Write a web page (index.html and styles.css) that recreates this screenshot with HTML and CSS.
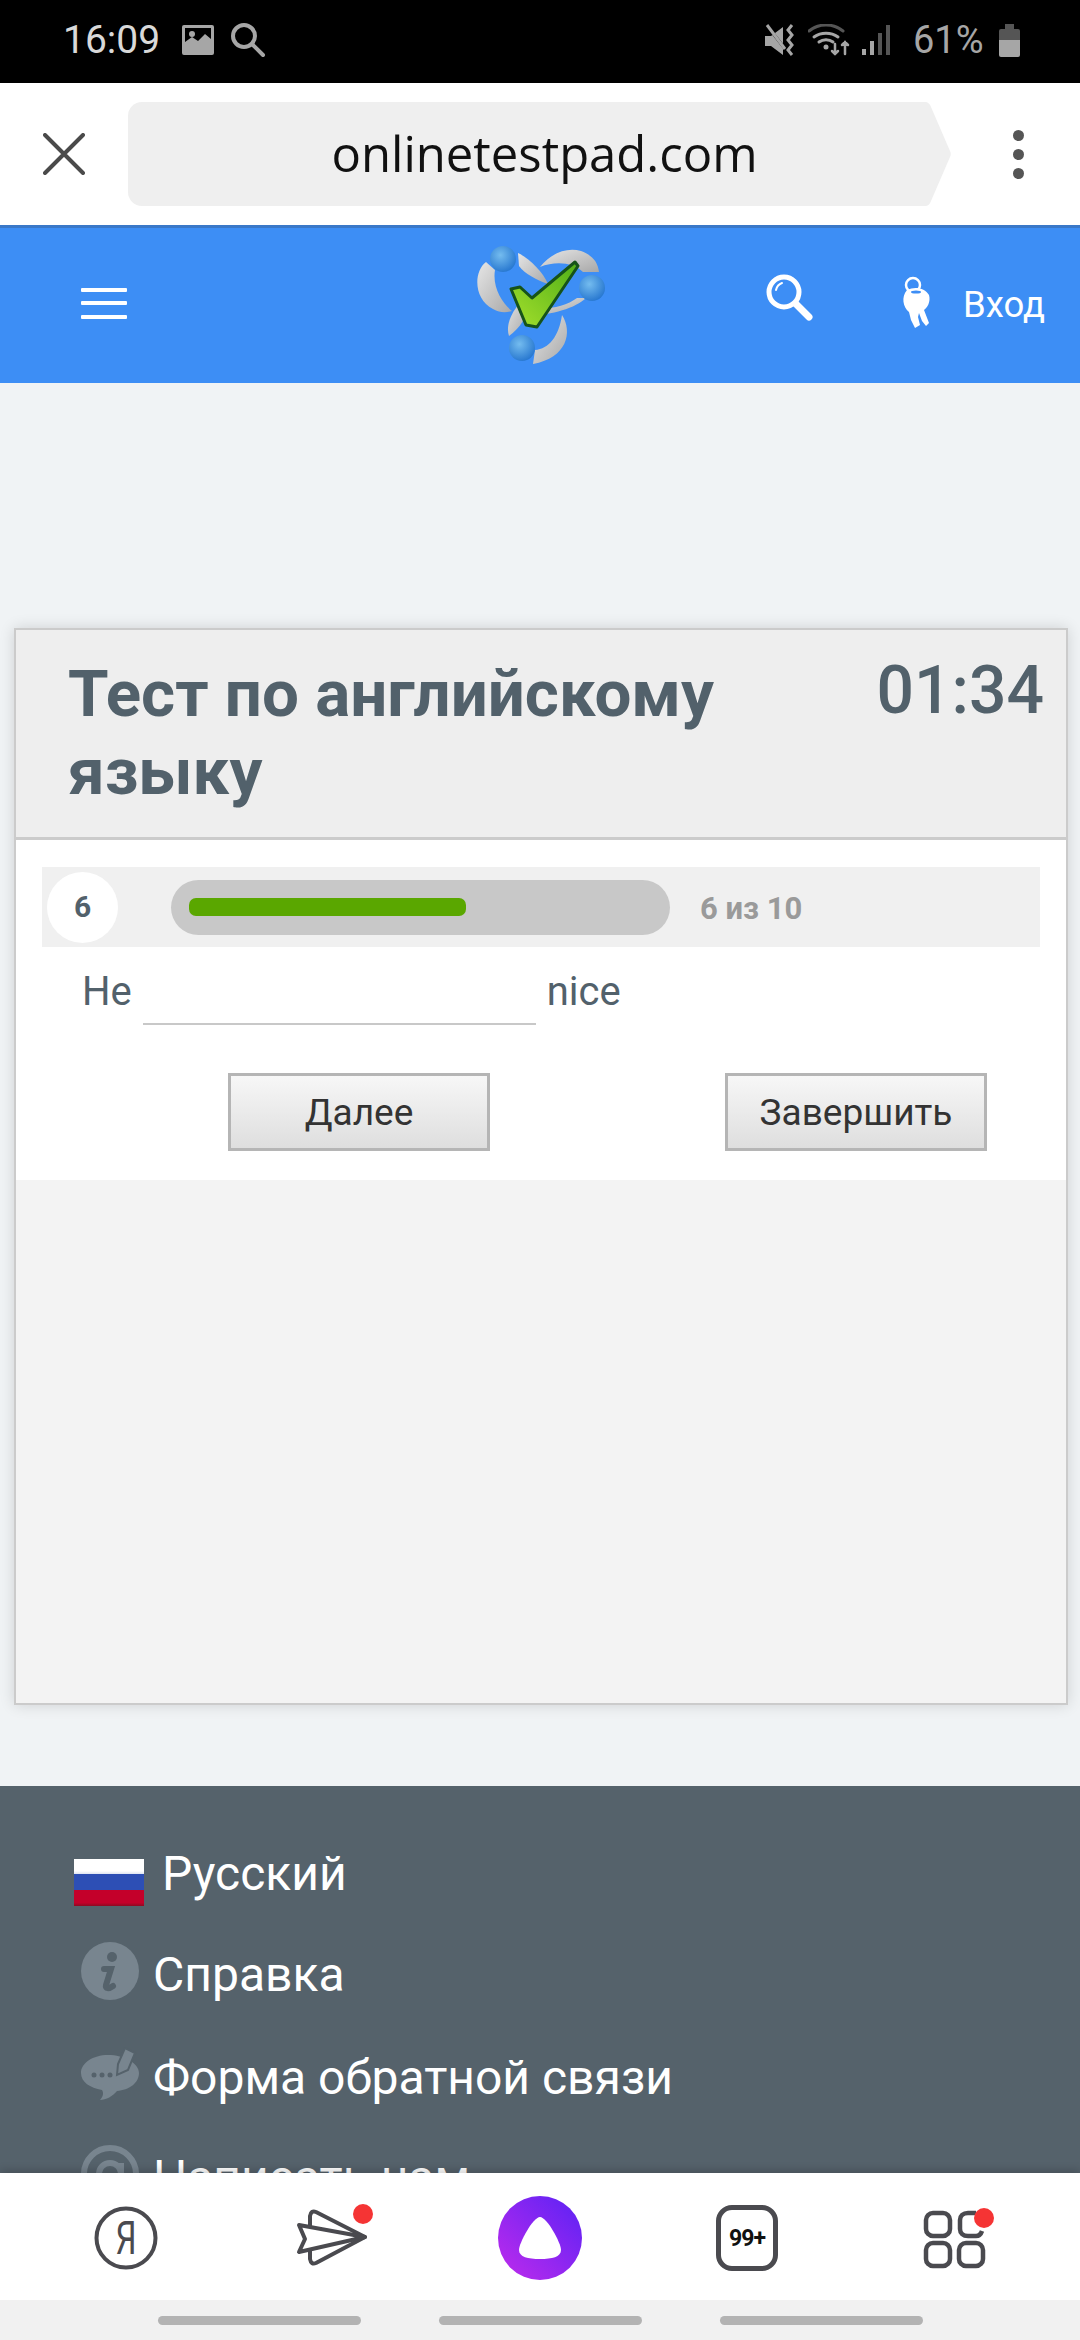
FILE: index.html
```html
<!DOCTYPE html>
<html lang="ru">
<head>
  <meta charset="UTF-8">
  <title>Тест по английскому языку</title>
  <link rel="stylesheet" href="styles.css">
</head>
<body>

  <div class="status-bar">
    <span class="clock">16:09</span>
    <svg class="st-picture" width="32" height="30" viewBox="0 0 32 30">
      <path fill="#a6a6a6" fill-rule="evenodd" d="M2 0h28a2 2 0 0 1 2 2v26a2 2 0 0 1-2 2H2a2 2 0 0 1-2-2V2a2 2 0 0 1 2-2zM3 3v14l7-5 6 4 7-7 6 5V3z"/>
      <circle cx="10" cy="9" r="3" fill="#a6a6a6"/>
    </svg>
    <svg class="st-search" width="36" height="36" viewBox="0 0 36 36" fill="none" stroke="#a6a6a6" stroke-width="4" stroke-linecap="round">
      <circle cx="14" cy="14" r="11"/>
      <path d="M22 22l11 11"/>
    </svg>
    <div class="status-right">
      <svg class="st-mute" width="31" height="32" viewBox="0 0 31 32">
        <path fill="#a6a6a6" d="M0 12h6l12-9v28L6 22H0z"/>
        <path stroke="#000" stroke-width="3" d="M0 -1l21 27"/>
        <path stroke="#a6a6a6" stroke-width="3" d="M2 1l18 24"/>
        <path stroke="#a6a6a6" stroke-width="3" fill="none" d="M27 1l-4 5 4 5-4 5 4 5-4 5 4 5"/>
      </svg>
      <svg class="st-wifi" width="42" height="32" viewBox="0 0 42 32" fill="none" stroke-linecap="round">
        <path stroke="#555" stroke-width="3" d="M1 7c10-8 24-8 34 0"/>
        <path stroke="#a6a6a6" stroke-width="3" d="M6 13c7-5 17-5 24 0M11 18c4-3 10-3 14 0"/>
        <circle cx="18" cy="23" r="2.5" fill="#a6a6a6"/>
        <path stroke="#a6a6a6" stroke-width="2.5" d="M27 20v10m-3-3l3 3 3-3M37 30V18m-3 3l3-3 3 3"/>
      </svg>
      <svg class="st-signal" width="28" height="32" viewBox="0 0 28 32">
        <rect x="0" y="25" width="4" height="6" fill="#a6a6a6"/>
        <rect x="8" y="17" width="4" height="14" fill="#a6a6a6"/>
        <rect x="16" y="9" width="4" height="22" fill="#555"/>
        <rect x="24" y="1" width="4" height="30" fill="#555"/>
      </svg>
      <span class="battery-text">61%</span>
      <div class="battery">
        <div class="battery-cap"></div>
        <div class="battery-empty"></div>
        <div class="battery-full"></div>
      </div>
    </div>
  </div>

  <div class="toolbar">
    <svg class="tb-close" width="42" height="42" viewBox="0 0 42 42" stroke="#4a4a4a" stroke-width="4" stroke-linecap="round">
      <path d="M2 2l38 38M40 2L2 40"/>
    </svg>
    <div class="address">onlinetestpad.com</div>
    <svg class="address-tip" width="26" height="104" viewBox="0 0 26 104"><path fill="#efefef" d="M0 0c3 0 5 2 6 5l19 44c1 2 1 4 0 6L6 99c-1 3-3 5-6 5z"/></svg>
    <div class="tb-menu"><i></i><i></i><i></i></div>
  </div>

  <div class="site-header">
    <div class="burger"><i></i><i></i><i></i></div>
    <svg class="logo" width="150" height="135" viewBox="0 0 150 135">
      <defs>
        <radialGradient id="ball" cx="0.4" cy="0.35" r="0.75">
          <stop offset="0" stop-color="#74bcef"/>
          <stop offset="1" stop-color="#1f70cc"/>
        </radialGradient>
        <linearGradient id="silver" x1="0" y1="0" x2="1" y2="1">
          <stop offset="0" stop-color="#e6e6e6"/>
          <stop offset="1" stop-color="#a8a8a8"/>
        </linearGradient>
        <linearGradient id="check" x1="1" y1="0" x2="0" y2="1">
          <stop offset="0" stop-color="#4fae18"/>
          <stop offset="1" stop-color="#a5e02c"/>
        </linearGradient>
      </defs>
      <path fill="url(#silver)" d="M21 26C8 36 9 64 28 73 35 77 41 77 47 75 38 68 27 52 30 34z"/>
      <path fill="url(#silver)" d="M53 17C64 22 78 36 83 48 72 44 60 38 54 30z"/>
      <path fill="url(#silver)" d="M75 31C86 17 102 11 116 15 127 19 133 26 134 36L118 36C108 26 90 25 75 31z"/>
      <path fill="url(#silver)" d="M121 62C110 73 80 81 58 79L60 71C80 75 100 71 112 62z"/>
      <path fill="url(#silver)" d="M61 61C65 76 58 90 44 100 40 88 48 72 61 61z"/>
      <path fill="url(#silver)" d="M97 79C108 96 102 122 68 128L70 114C84 113 94 100 97 79z"/>
      <path fill="url(#check)" stroke="#16531a" stroke-width="3" stroke-linejoin="round" d="M46 53L55 51 67 62 110 26 113 30 72 91 61 89z"/>
      <circle cx="38" cy="23" r="13" fill="url(#ball)"/>
      <circle cx="127" cy="52" r="13" fill="url(#ball)"/>
      <circle cx="57" cy="112" r="13" fill="url(#ball)"/>
    </svg>
    <svg class="hd-search" width="48" height="48" viewBox="0 0 48 48" fill="none" stroke="#fff" stroke-linecap="round">
      <circle cx="19" cy="19" r="15" stroke-width="5"/>
      <path d="M11 17c1-4 3-6 6-7" stroke-width="2"/>
      <path d="M31 31l13 13" stroke-width="7"/>
    </svg>
    <svg class="hd-keys" width="60" height="70" viewBox="0 0 60 70">
      <circle cx="20" cy="20" r="7" fill="none" stroke="#fff" stroke-width="2.5"/>
      <path fill="#fff" d="M14 25C22 21 32 23 36 30 38 37 34 43 31 45L36 58 33 61 29 56 26 48 25 52 27 60 22 63 18 55 16 47C10 42 8 32 14 25z"/>
      <ellipse cx="23" cy="27" rx="5" ry="1.5" fill="#3d8ef5"/>
    </svg>
    <span class="login">Вход</span>
  </div>

  <div class="page">
    <div class="test-card">
      <div class="test-head">
        <h1>Тест по английскому языку</h1>
        <div class="timer">01:34</div>
      </div>
      <div class="test-body">
        <div class="progress-row">
          <div class="q-num">6</div>
          <div class="bar"><div class="bar-fill"></div></div>
          <div class="q-count">6 из 10</div>
        </div>
        <div class="question">
          <span>He</span>
          <input class="answer" type="text">
          <span>nice</span>
        </div>
        <div class="buttons">
          <button class="btn btn-next">Далее</button>
          <button class="btn btn-finish">Завершить</button>
        </div>
      </div>
    </div>

    <div class="footer">
      <div class="foot-item foot-lang">
        <div class="flag"><i class="fl-w"></i><i class="fl-b"></i><i class="fl-r"></i></div>
        <span>Русский</span>
      </div>
      <div class="foot-item foot-help">
        <svg width="58" height="58" viewBox="0 0 58 58">
          <circle cx="29" cy="29" r="29" fill="#78858f"/>
          <circle cx="31" cy="15" r="5" fill="#55626b"/>
          <path fill="none" stroke="#55626b" stroke-width="6" stroke-linecap="round" d="M23 27h7l-5 16c-1 4 3 4 7 1"/>
        </svg>
        <span>Справка</span>
      </div>
      <div class="foot-item foot-form">
        <svg width="58" height="54" viewBox="11 9 58 54">
          <path fill="#78858f" d="M38 17C23 17 11 25 11 35c0 9 9 15 21 17 2 3 1 7-2 10 6 0 13-4 17-9 12-1 22-8 22-18S54 17 38 17z"/>
          <path fill="#78858f" stroke="#55626b" stroke-width="2" d="M47 37L48 26 55 10 65 15 58 32z"/>
          <circle cx="24" cy="37" r="2.5" fill="#55626b"/>
          <circle cx="32" cy="37" r="2.5" fill="#55626b"/>
          <circle cx="40" cy="37" r="2.5" fill="#55626b"/>
        </svg>
        <span>Форма обратной связи</span>
      </div>
      <div class="foot-item foot-mail">
        <svg width="58" height="58" viewBox="0 0 58 58" fill="none" stroke="#78858f">
          <circle cx="29" cy="29" r="26" stroke-width="6"/>
          <circle cx="29" cy="29" r="11" stroke-width="6"/>
          <path stroke-width="6" d="M40 18v22"/>
        </svg>
        <span>Написать нам</span>
      </div>
    </div>
  </div>

  <div class="bottom-bar">
    <svg class="bb-yandex" width="64" height="64" viewBox="0 0 64 64">
      <circle cx="32" cy="32" r="29.5" fill="none" stroke="#4a4a4f" stroke-width="4"/>
      <text class="bb-yandex-letter" transform="translate(32 48) scale(0.72 1)">Я</text>
    </svg>
    <svg class="bb-plane" width="110" height="90" viewBox="0 0 110 90" fill="none" stroke="#4a4a4f" stroke-width="4" stroke-linejoin="round">
      <path d="M30 34V24Q31 18 36 20L85 45 36 71Q31 73 30 67V58"/>
      <path d="M85 45L19 33 25 47 19 60z"/>
      <circle cx="83" cy="22" r="10" fill="#f53434" stroke="none"/>
    </svg>
    <div class="alice">
      <svg width="42" height="42" viewBox="0 0 42 42"><path fill="#fff" d="M21 0C28 0 42 26 42 33 42 40 33 42 21 42S0 40 0 33C0 26 14 0 21 0z"/></svg>
    </div>
    <div class="tabs-count">99+</div>
    <svg class="bb-apps" width="72" height="62" viewBox="0 0 72 62" fill="none" stroke="#4a4a4f" stroke-width="4.5">
      <rect x="3" y="6" width="24" height="23" rx="7"/>
      <path d="M53 6h-8c-5 0-8 3-8 7v9c0 4 3 7 8 7h8c3 0 5-2 6-5"/>
      <rect x="3" y="36" width="24" height="23" rx="7"/>
      <rect x="36" y="36" width="24" height="23" rx="7"/>
      <circle cx="61" cy="11" r="10" fill="#f53434" stroke="none"/>
    </svg>
  </div>

  <div class="nav-bar"><i></i><i></i><i></i></div>

</body>
</html>
```

FILE: styles.css
```css
* {
  box-sizing: border-box;
}

body {
  font-family: Roboto, sans-serif;
  background-color: #f0f3f5;
  margin: 0;
  padding: 0;
  width: 1080px;
  height: 2340px;
  display: flex;
  flex-direction: column;
  overflow: hidden;
}

.status-bar {
  height: 83px;
  flex: none;
  background: #000;
  display: flex;
  align-items: center;
  padding: 0 0 3px 63px;
  color: #d9d9d9;
}

.clock {
  font-size: 39px;
}

.st-picture {
  margin-left: 22px;
}

.st-search {
  margin-left: 16px;
}

.status-right {
  margin-left: auto;
  padding-right: 60px;
  display: flex;
  align-items: center;
}

.st-wifi,
.st-signal {
  margin-left: 12px;
}

.battery-text {
  font-size: 38px;
  color: #a6a6a6;
  margin-left: 23px;
  width: 70px;
}

.battery {
  width: 21px;
  margin-left: 16px;
  display: flex;
  flex-direction: column;
  align-items: center;
}

.battery-cap {
  width: 9px;
  height: 5px;
  background: #555;
}

.battery-empty {
  width: 21px;
  height: 11px;
  background: #555;
  border-radius: 2px 2px 0 0;
}

.battery-full {
  width: 21px;
  height: 17px;
  background: #a6a6a6;
  border-radius: 0 0 2px 2px;
}

.toolbar {
  height: 142px;
  flex: none;
  background: #fff;
  display: flex;
  align-items: center;
  padding-left: 43px;
}

.address {
  margin-left: 43px;
  width: 797px;
  height: 104px;
  background: #efefef;
  border-radius: 14px 0 0 14px;
  font-family: "Open Sans", sans-serif;
  font-size: 49px;
  color: #111;
  display: flex;
  align-items: center;
  justify-content: center;
  padding: 0 0 3px 36px;
}

.tb-menu {
  margin-left: 62px;
  display: flex;
  flex-direction: column;
  gap: 8px;
}

.tb-menu i {
  display: block;
  width: 11px;
  height: 11px;
  border-radius: 50%;
  background: #555;
}

.site-header {
  height: 158px;
  flex: none;
  background: #3d8ef5;
  border-top: 3px solid #3a78c8;
  display: flex;
  align-items: center;
  color: #fff;
  padding: 0 0 5px 81px;
}

.burger {
  width: 46px;
  display: flex;
  flex-direction: column;
  gap: 9.5px;
}

.burger i {
  display: block;
  height: 4px;
  background: #fff;
  border-radius: 1px;
}

.logo {
  margin-left: 338px;
}

.hd-search {
  margin-left: 150px;
  margin-top: -13px;
}

.hd-keys {
  margin-left: 80px;
  margin-top: -6px;
}

.login {
  margin-left: 10px;
  margin-top: 2px;
  font-size: 36.5px;
  font-weight: 400;
}

.page {
  flex: 1;
  min-height: 0;
  overflow: hidden;
  padding-top: 245px;
}

.test-card {
  margin-left: 14px;
  width: 1054px;
  height: 1077px;
  background: #f3f3f3;
  border: 2px solid #cbcbcb;
  box-shadow: 0 0 14px rgba(0,0,0,0.14);
}

.test-head {
  height: 210px;
  background: #eeeeee;
  border-bottom: 3px solid #cbcbcb;
  display: flex;
  justify-content: space-between;
  padding: 25px 22px 0 52px;
  color: #52616b;
}

.test-head h1 {
  margin: 0;
  width: 700px;
  font-size: 65.5px;
  line-height: 78px;
  font-weight: 700;
}

.timer {
  font-size: 66px;
  font-weight: 500;
  line-height: 66px;
  margin-top: 3px;
}

.test-body {
  height: 340px;
  background: #fff;
  padding: 27px 26px 0;
}

.progress-row {
  height: 80px;
  background: #f0f0f0;
  display: flex;
  align-items: center;
  padding-left: 5px;
}

.q-num {
  width: 71px;
  height: 71px;
  border-radius: 50%;
  background: #fff;
  display: flex;
  align-items: center;
  justify-content: center;
  font-size: 30px;
  font-weight: 700;
  color: #52616b;
  padding-bottom: 2px;
}

.bar {
  margin-left: 53px;
  width: 499px;
  height: 55px;
  border-radius: 28px;
  background: #c8c8c8;
  padding: 18px;
}

.bar-fill {
  width: 277px;
  height: 18px;
  border-radius: 7px;
  background: #5aa700;
}

.q-count {
  margin-left: 30px;
  margin-top: 2px;
  font-size: 31px;
  font-weight: 700;
  color: #9a9a9a;
}

.question {
  display: flex;
  align-items: center;
  height: 78px;
  padding-left: 40px;
  font-size: 40px;
  font-weight: 400;
  color: #52616b;
}

.question span {
  margin-top: 10px;
}

.answer {
  margin: 0 11px;
  width: 393px;
  height: 78px;
  border: 0;
  border-bottom: 2px solid #c8c8c8;
  background: transparent;
  outline: none;
}

.buttons {
  margin-top: 48px;
  display: flex;
  padding-left: 186px;
}

.btn {
  width: 262px;
  height: 78px;
  border: 3px solid #b5b5b5;
  border-radius: 0;
  background: linear-gradient(#f7f7f7, #dedede);
  font-family: Roboto, sans-serif;
  font-size: 37px;
  color: #333;
  padding: 0;
}

.btn-finish {
  margin-left: 235px;
}

.footer {
  margin-top: 81px;
  height: 500px;
  background: #55626b;
  color: #fff;
  padding: 58px 0 0 81px;
  font-size: 48px;
  font-weight: 400;
}

.foot-item {
  display: flex;
  align-items: center;
  gap: 14px;
  height: 60px;
}

.foot-item span {
  margin-top: 6px;
}

.foot-lang {
  margin-left: -7px;
  gap: 18px;
}

.foot-lang span {
  margin-top: -1px;
}

.foot-help {
  margin-top: 37px;
}

.foot-form {
  margin-top: 43px;
}

.foot-mail {
  margin-top: 40px;
}

.flag {
  width: 70px;
  height: 47px;
  margin-top: 16px;
  display: flex;
  flex-direction: column;
}

.flag i {
  display: block;
  flex: 1;
}

.fl-w {
  background: linear-gradient(#fff 80%, #dfe4f2);
}

.fl-b {
  background: #2d4fb5;
}

.fl-r {
  background: linear-gradient(#c4002a 80%, #8d0a22);
}

.bottom-bar {
  height: 127px;
  flex: none;
  position: relative;
  background: #fff;
  box-shadow: 0 -3px 8px rgba(0,0,0,0.18);
  display: flex;
  align-items: center;
  padding: 3px 0 0 94px;
}

.bb-yandex-letter {
  font-family: Roboto, sans-serif;
  font-size: 46px;
  fill: #4a4a4f;
  text-anchor: middle;
}

.bb-plane {
  margin-left: 122px;
  margin-top: -3px;
}

.alice {
  margin-left: 108px;
  width: 84px;
  height: 84px;
  border-radius: 50%;
  background: linear-gradient(45deg, #c02bec, #5a22f5);
  display: flex;
  align-items: center;
  justify-content: center;
}

.tabs-count {
  margin-left: 134px;
  width: 62px;
  height: 66px;
  border: 5px solid #4a4a4f;
  border-radius: 16px;
  display: flex;
  align-items: center;
  justify-content: center;
  font-size: 23px;
  font-weight: 700;
  color: #111;
  letter-spacing: -1px;
}

.bb-apps {
  margin-left: 145px;
}

.nav-bar {
  height: 40px;
  flex: none;
  position: relative;
  background: #f1f1f1;
  display: flex;
  justify-content: center;
  gap: 78px;
  padding-top: 16px;
}

.nav-bar i {
  display: block;
  width: 203px;
  height: 9px;
  border-radius: 5px;
  background: #b3b3b3;
}
```
